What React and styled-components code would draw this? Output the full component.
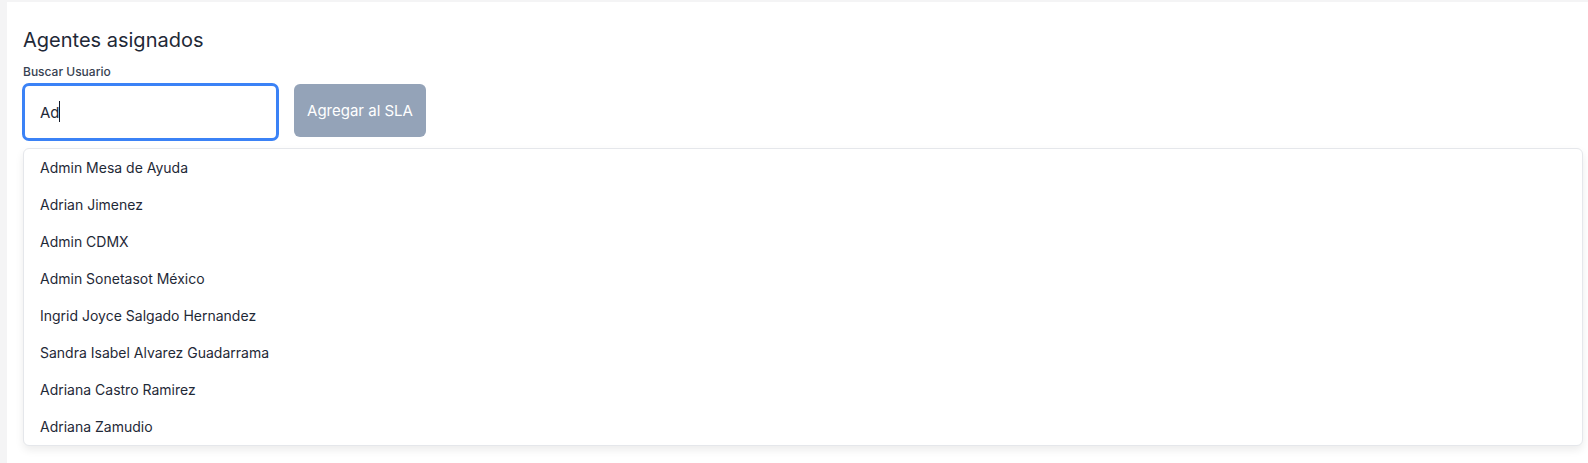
import React from 'react';
import styled, { createGlobalStyle } from 'styled-components';

const GlobalStyle = createGlobalStyle`
  body {
    margin: 0;
    background-color: #f4f4f5;
    font-family: 'Inter', 'Noto Sans', sans-serif;
    color: #1f2937;
  }
`;

const Page = styled.div`
  padding: 2px 0 0 7px;
  height: 463px;
  overflow: hidden;
  box-sizing: border-box;
`;

const Card = styled.section`
  background-color: #ffffff;
  padding: 24px 5px 40px 15px;
  min-height: 500px;
  box-sizing: border-box;
`;

const Title = styled.h2`
  font-size: 20px;
  font-weight: 400;
  line-height: 28px;
  margin: 0 0 10px 1px;
  color: #1f2937;
`;

const Label = styled.label`
  display: block;
  font-size: 12px;
  font-weight: 500;
  line-height: 16px;
  color: #374151;
  margin: 0 0 3px 1px;
`;

const SearchRow = styled.div`
  display: flex;
  align-items: flex-start;
  gap: 15px;
`;

const InputWrap = styled.div`
  position: relative;
`;

const Input = styled.input`
  width: 257px;
  height: 58px;
  box-sizing: border-box;
  border: 3px solid #3b82f6;
  border-radius: 7px;
  padding: 0 15px;
  font-family: inherit;
  font-size: 15px;
  color: #1f2937;
  outline: none;
  caret-color: transparent;
`;

const Caret = styled.span`
  position: absolute;
  top: 18px;
  width: 1px;
  height: 21px;
  background-color: #111827;
  pointer-events: none;
`;

const AddButton = styled.button`
  margin-top: 1px;
  width: 132px;
  height: 53px;
  border: none;
  border-radius: 6px;
  background-color: #94a3b8;
  color: #ffffff;
  font-family: inherit;
  font-size: 15px;
  cursor: not-allowed;
`;

const Dropdown = styled.ul`
  list-style: none;
  margin: 7px 0 0 1px;
  padding: 0;
  background-color: #ffffff;
  border: 1px solid #e5e7eb;
  border-radius: 6px;
  box-shadow: 0 4px 8px rgba(0, 0, 0, 0.08);
`;

const Option = styled.li`
  height: 37px;
  line-height: 37px;
  padding-left: 16px;
  font-size: 14px;
  color: #1f2937;
  cursor: pointer;
`;

const results = [
  'Admin Mesa de Ayuda',
  'Adrian Jimenez',
  'Admin CDMX',
  'Admin Sonetasot México',
  'Ingrid Joyce Salgado Hernandez',
  'Sandra Isabel Alvarez Guadarrama',
  'Adriana Castro Ramirez',
  'Adriana Zamudio',
];

export default function App() {
  return (
    <>
      <GlobalStyle />
      <Page>
        <Card>
          <Title>Agentes asignados</Title>
          <Label htmlFor="buscar">Buscar Usuario</Label>
          <SearchRow>
            <InputWrap>
              <Input id="buscar" defaultValue="Ad" />
              <Caret style={{ left: 37 }} />
            </InputWrap>
            <AddButton disabled>Agregar al SLA</AddButton>
          </SearchRow>
          <Dropdown>
            {results.map((name) => (
              <Option key={name}>{name}</Option>
            ))}
          </Dropdown>
        </Card>
      </Page>
    </>
  );
}
